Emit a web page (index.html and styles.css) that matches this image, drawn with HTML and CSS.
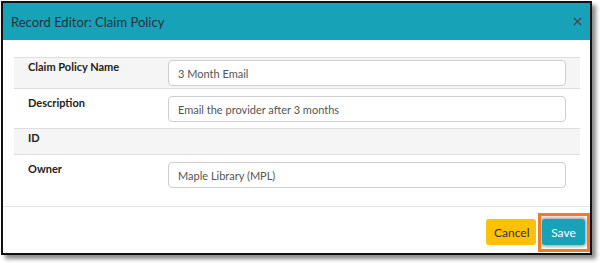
FILE: index.html
```html
<html>
    <head>
        <meta name="viewport" content="width=device-width, initial-scale=1">
        <link rel="stylesheet" href="styles.css">
    </head>
    <body>
        <div class='frame'>
            <div class='modal-header'>
                <div class='modal-title'>Record Editor: Claim Policy</div>
                <button class='close' aria-label='Close'>
                    <svg width='9' height='9' viewBox='0 0 9 9'>
                        <path d='M1 1 L8 8 M8 1 L1 8' stroke='#3a4a50' stroke-width='1.3' fill='none'/>
                    </svg>
                </button>
            </div>
            <div class='modal-body'>
                <div class='row odd'>
                    <div class='label'>Claim Policy Name</div>
                    <div class='value'><input class='field' value='3 Month Email'></div>
                </div>
                <div class='row'>
                    <div class='label'>Description</div>
                    <div class='value'><input class='field' value='Email the provider after 3 months'></div>
                </div>
                <div class='row odd'>
                    <div class='label'>ID</div>
                    <div class='value'></div>
                </div>
                <div class='row'>
                    <div class='label'>Owner</div>
                    <div class='value'><input class='field' value='Maple Library (MPL)'></div>
                </div>
            </div>
            <div class='modal-footer'>
                <button class='btn cancel'>Cancel</button>
                <span class='highlight'>
                    <button class='btn save'>Save</button>
                </span>
            </div>
        </div>
    </body>
</html>
```

FILE: styles.css
```css
body {
    margin: 0;
    background: white;
    font-family: Lato, "Open Sans", sans-serif;
}
.frame {
    margin: 1px 0 0 1px;
    width: 587px;
    border: 2px solid #111;
    background: white;
    box-shadow: 4px 4px 4px rgba(0, 0, 0, 0.45);
}
.modal-header {
    height: 37px;
    background: #17a2b8;
    display: flex;
    align-items: center;
    justify-content: space-between;
    padding: 0 8px 0 8px;
}
.modal-title {
    font-size: 13px;
    color: #23343a;
}
.close {
    background: none;
    border: none;
    padding: 0;
    margin: 0;
    width: 9px;
    height: 9px;
    display: flex;
}
.modal-body {
    padding: 17px 10px 12px 11px;
}
.row {
    display: grid;
    grid-template-columns: 154px 1fr;
    border-top: 1px solid #dedede;
    padding: 7px 0 6px;
}
.row.odd {
    background: #f5f5f5;
    padding: 2px 0;
}
.label {
    padding-left: 14px;
    font-size: 11px;
    font-weight: bold;
    line-height: 14px;
    color: #222;
}
.value {
    min-height: 21px;
    padding-right: 14px;
}
.field {
    display: block;
    width: 100%;
    height: 26px;
    box-sizing: border-box;
    border: 1px solid #cfcfcf;
    border-radius: 4px;
    padding: 0 9px;
    font-family: Lato, "Open Sans", sans-serif;
    font-size: 11px;
    color: #555;
    background: white;
}
.modal-footer {
    border-top: 1px solid #e5e5e5;
    padding: 12px 5px 8px;
    display: flex;
    justify-content: flex-end;
    gap: 6px;
}
.btn {
    height: 26px;
    border: none;
    border-radius: 3px;
    padding: 0 8px;
    font-family: Lato, "Open Sans", sans-serif;
    font-size: 12px;
    margin: 0;
}
.cancel {
    width: 50px;
    background: #ffc107;
    color: #333;
}
.save {
    width: 43px;
    background: #17a2b8;
    color: white;
    box-shadow: 0 0 3px 2px rgba(0, 0, 0, 0.3);
}
.highlight {
    position: relative;
    display: flex;
}
.highlight::after {
    content: '';
    position: absolute;
    top: -6px;
    bottom: -7px;
    left: -4px;
    right: -5px;
    border: 3px solid #f47b20;
}
```
